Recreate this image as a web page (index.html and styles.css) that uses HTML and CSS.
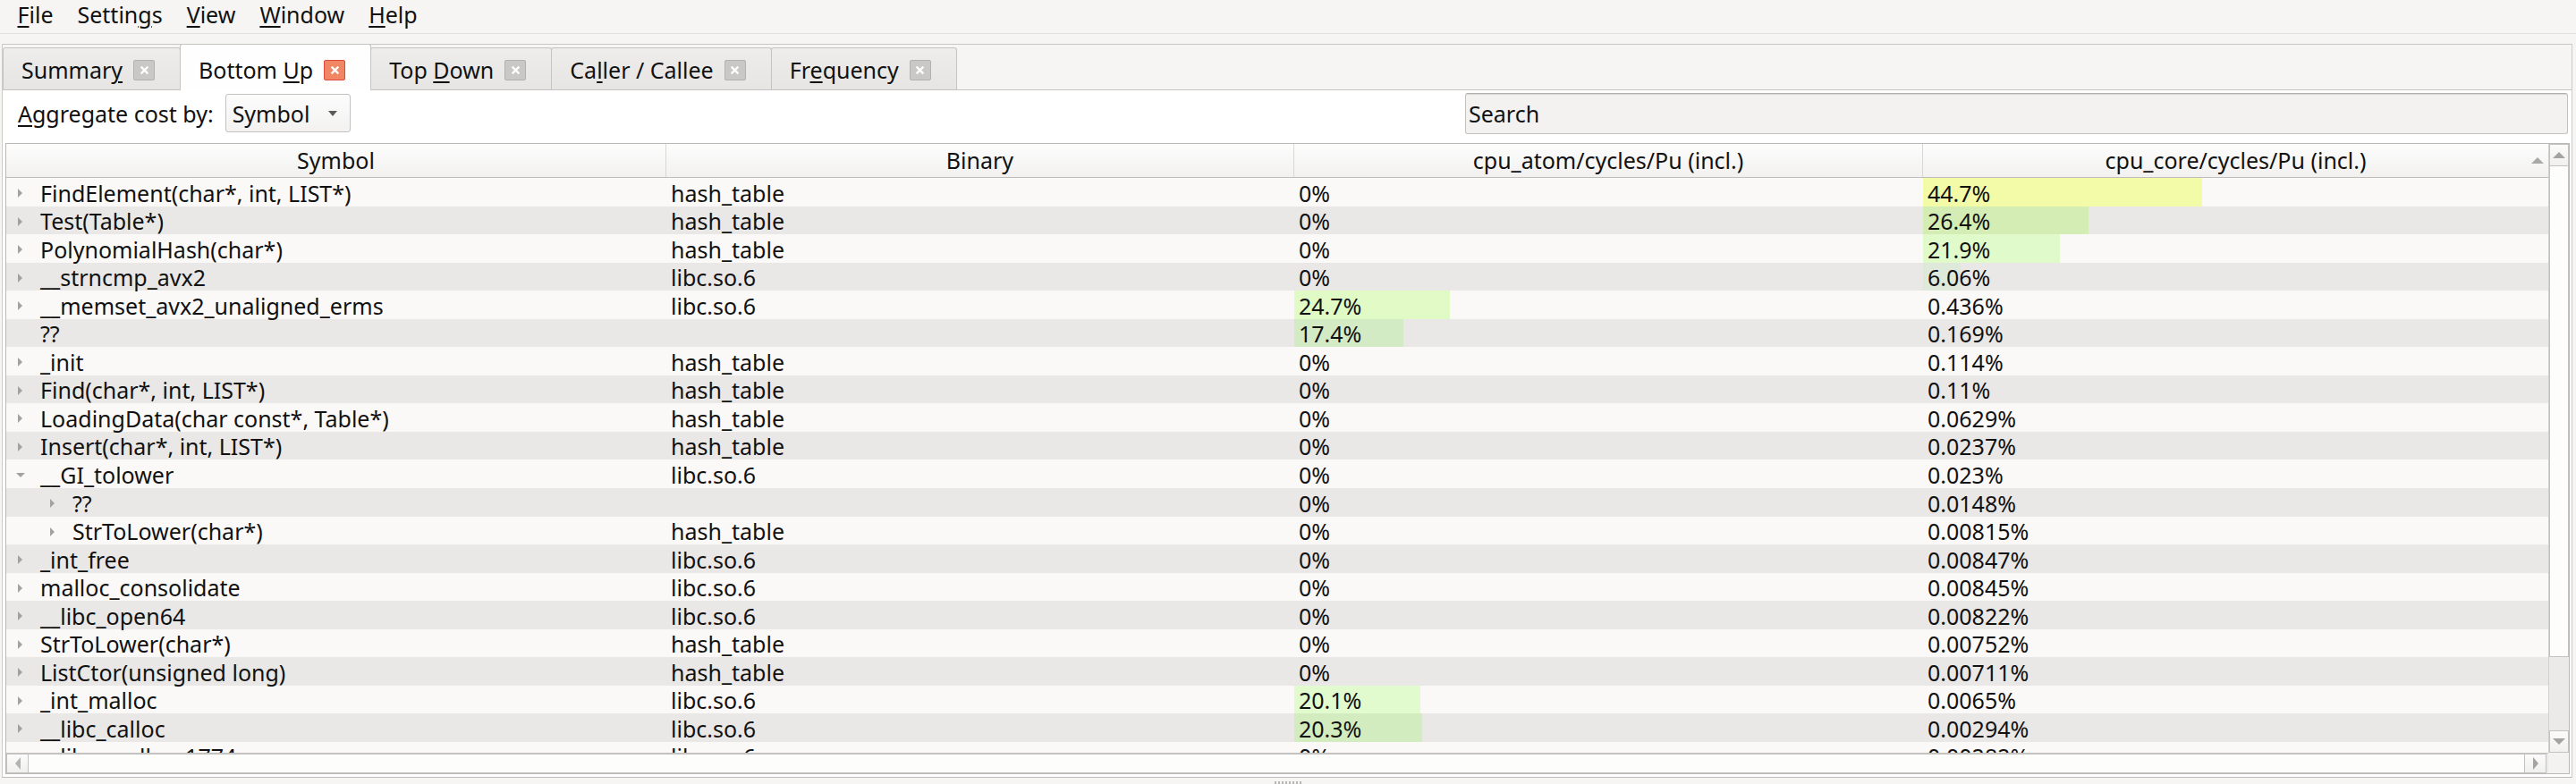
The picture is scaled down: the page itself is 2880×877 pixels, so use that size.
FILE: index.html
```html
<!DOCTYPE html>
<html>
<head>
<meta charset="utf-8">
<link rel="stylesheet" href="styles.css">
</head>
<body>
<div class="menubar">
  <span class="menu"><u>F</u>ile</span>
  <span class="menu">Settin<u>g</u>s</span>
  <span class="menu"><u>V</u>iew</span>
  <span class="menu"><u>W</u>indow</span>
  <span class="menu"><u>H</u>elp</span>
</div>
<div class="tabwidget">
  <div class="tabbar">
    <div class="tab"><span class="tab-label">Summar<u>y</u></span><span class="close"><svg viewBox="0 0 10 10"><path d="M1.5 1.5L8.5 8.5M8.5 1.5L1.5 8.5"/></svg></span></div>
    <div class="tab active"><span class="tab-label">Bottom <u>U</u>p</span><span class="close"><svg viewBox="0 0 10 10"><path d="M1.5 1.5L8.5 8.5M8.5 1.5L1.5 8.5"/></svg></span></div>
    <div class="tab"><span class="tab-label">Top <u>D</u>own</span><span class="close"><svg viewBox="0 0 10 10"><path d="M1.5 1.5L8.5 8.5M8.5 1.5L1.5 8.5"/></svg></span></div>
    <div class="tab"><span class="tab-label">Ca<u>l</u>ler / Callee</span><span class="close"><svg viewBox="0 0 10 10"><path d="M1.5 1.5L8.5 8.5M8.5 1.5L1.5 8.5"/></svg></span></div>
    <div class="tab"><span class="tab-label">Fr<u>e</u>quency</span><span class="close"><svg viewBox="0 0 10 10"><path d="M1.5 1.5L8.5 8.5M8.5 1.5L1.5 8.5"/></svg></span></div>
  </div>
  <div class="pane">
    <div class="toolbar">
      <span class="label"><u>A</u>ggregate cost by:</span>
      <div class="combo"><span>Symbol</span><i class="combo-arrow"></i></div>
      <div class="search">Search</div>
    </div>
    <div class="tree">
      <div class="view">
        <div class="header">
          <div class="hcell">Symbol</div>
          <div class="hcell">Binary</div>
          <div class="hcell">cpu_atom/cycles/Pu (incl.)</div>
          <div class="hcell sorted">cpu_core/cycles/Pu (incl.)<i class="sort-ind"></i></div>
        </div>
        <div class="rows">
          <div class="row"><div class="cell sym"><i class="tw"></i><span>FindElement(char*, int, LIST*)</span></div><div class="cell">hash_table</div><div class="cell">0%</div><div class="cell bar" style="--p:44.7%;--c:hsl(66.4 100% 50% / .326)">44.7%</div></div>
          <div class="row"><div class="cell sym"><i class="tw"></i><span>Test(Table*)</span></div><div class="cell">hash_table</div><div class="cell">0%</div><div class="cell bar" style="--p:26.4%;--c:hsl(88.3 100% 50% / .216)">26.4%</div></div>
          <div class="row"><div class="cell sym"><i class="tw"></i><span>PolynomialHash(char*)</span></div><div class="cell">hash_table</div><div class="cell">0%</div><div class="cell bar" style="--p:21.9%;--c:hsl(93.7 100% 50% / .184)">21.9%</div></div>
          <div class="row"><div class="cell sym"><i class="tw"></i><span>__strncmp_avx2</span></div><div class="cell">libc.so.6</div><div class="cell">0%</div><div class="cell bar" style="--p:6.06%;--c:hsl(112.7 100% 50% / .055)">6.06%</div></div>
          <div class="row"><div class="cell sym"><i class="tw"></i><span>__memset_avx2_unaligned_erms</span></div><div class="cell">libc.so.6</div><div class="cell bar" style="--p:24.7%;--c:hsl(90.4 100% 50% / .204)">24.7%</div><div class="cell">0.436%</div></div>
          <div class="row"><div class="cell sym"><i class="tw none"></i><span>??</span></div><div class="cell"></div><div class="cell bar" style="--p:17.4%;--c:hsl(99.1 100% 50% / .150)">17.4%</div><div class="cell">0.169%</div></div>
          <div class="row"><div class="cell sym"><i class="tw"></i><span>_init</span></div><div class="cell">hash_table</div><div class="cell">0%</div><div class="cell">0.114%</div></div>
          <div class="row"><div class="cell sym"><i class="tw"></i><span>Find(char*, int, LIST*)</span></div><div class="cell">hash_table</div><div class="cell">0%</div><div class="cell">0.11%</div></div>
          <div class="row"><div class="cell sym"><i class="tw"></i><span>LoadingData(char const*, Table*)</span></div><div class="cell">hash_table</div><div class="cell">0%</div><div class="cell">0.0629%</div></div>
          <div class="row"><div class="cell sym"><i class="tw"></i><span>Insert(char*, int, LIST*)</span></div><div class="cell">hash_table</div><div class="cell">0%</div><div class="cell">0.0237%</div></div>
          <div class="row"><div class="cell sym"><i class="tw open"></i><span>__GI_tolower</span></div><div class="cell">libc.so.6</div><div class="cell">0%</div><div class="cell">0.023%</div></div>
          <div class="row"><div class="cell sym child"><i class="tw"></i><span>??</span></div><div class="cell"></div><div class="cell">0%</div><div class="cell">0.0148%</div></div>
          <div class="row"><div class="cell sym child"><i class="tw"></i><span>StrToLower(char*)</span></div><div class="cell">hash_table</div><div class="cell">0%</div><div class="cell">0.00815%</div></div>
          <div class="row"><div class="cell sym"><i class="tw"></i><span>_int_free</span></div><div class="cell">libc.so.6</div><div class="cell">0%</div><div class="cell">0.00847%</div></div>
          <div class="row"><div class="cell sym"><i class="tw"></i><span>malloc_consolidate</span></div><div class="cell">libc.so.6</div><div class="cell">0%</div><div class="cell">0.00845%</div></div>
          <div class="row"><div class="cell sym"><i class="tw"></i><span>__libc_open64</span></div><div class="cell">libc.so.6</div><div class="cell">0%</div><div class="cell">0.00822%</div></div>
          <div class="row"><div class="cell sym"><i class="tw"></i><span>StrToLower(char*)</span></div><div class="cell">hash_table</div><div class="cell">0%</div><div class="cell">0.00752%</div></div>
          <div class="row"><div class="cell sym"><i class="tw"></i><span>ListCtor(unsigned long)</span></div><div class="cell">hash_table</div><div class="cell">0%</div><div class="cell">0.00711%</div></div>
          <div class="row"><div class="cell sym"><i class="tw"></i><span>_int_malloc</span></div><div class="cell">libc.so.6</div><div class="cell bar" style="--p:20.1%;--c:hsl(95.9 100% 50% / .170)">20.1%</div><div class="cell">0.0065%</div></div>
          <div class="row"><div class="cell sym"><i class="tw"></i><span>__libc_calloc</span></div><div class="cell">libc.so.6</div><div class="cell bar" style="--p:20.3%;--c:hsl(95.6 100% 50% / .172)">20.3%</div><div class="cell">0.00294%</div></div>
          <div class="row"><div class="cell sym"><i class="tw"></i><span>__libc_malloc_1774</span></div><div class="cell">libc.so.6</div><div class="cell">0%</div><div class="cell">0.00282%</div></div>
        </div>
      </div>
      <div class="vscroll">
        <div class="sbtn"><i class="arr up"></i></div>
        <div class="vslider"></div>
        <div class="trough"></div>
        <div class="sbtn"><i class="arr down"></i></div>
      </div>
      <div class="hscroll">
        <div class="sbtn"><i class="arr left"></i></div>
        <div class="hslider"></div>
        <div class="sbtn"><i class="arr right"></i></div>
      </div>
      <div class="corner"></div>
    </div>
  </div>
</div>
<div class="splitter"><i class="grip"></i></div>
</body>
</html>
```
FILE: styles.css
```css
* { box-sizing: border-box; }
html, body { margin: 0; height: 877px; overflow: hidden; }
body {
  background: #f6f5f4;
  font-family: "Noto Sans", "DejaVu Sans", sans-serif;
  font-size: 25px;
  color: #111;
  display: flex;
  flex-direction: column;
}
u { text-decoration: underline; text-decoration-thickness: 2px; text-underline-offset: 3px; }

/* menu bar */
.menubar {
  height: 38px;
  flex: none;
  display: flex;
  align-items: flex-start;
  padding-left: 6px;
  border-bottom: 1px solid #e2e0de;
}
.menu { padding: 0 13.5px; line-height: 33px; }

/* tab widget */
.tabwidget {
  flex: 1;
  margin: 11px 4px 0 2px;
  border-left: 1px solid #cdcbc8;
  border-right: 1px solid #cdcbc8;
  border-bottom: 1px solid #bdbbb8;
  display: flex;
  flex-direction: column;
  min-height: 0;
}
.tabbar {
  height: 52px;
  flex: none;
  display: flex;
  align-items: flex-end;
  border-top: 1px solid #c9c7c4;
  border-bottom: 1px solid #c6c4c1;
}
.tab {
  height: 47px;
  display: flex;
  align-items: center;
  padding: 8px 28px 6px 20px;
  background: linear-gradient(#eeedec, #e6e5e3);
  border: 1px solid #c6c4c1;
  border-bottom: none;
  border-radius: 3px 3px 0 0;
  margin-right: -1px;
  line-height: 32px;
  white-space: nowrap;
}
.tab.active {
  height: 52px;
  margin-bottom: -1px;
  padding: 12px 28px 7px 20px;
  background: #fefefe;
  position: relative;
  z-index: 1;
}
.close {
  flex: none;
  width: 24px;
  height: 23px;
  margin-left: 12px;
  border: 1px solid #b3b1ae;
  border-radius: 2px;
  background: #c9c8c6;
  display: flex;
  align-items: center;
  justify-content: center;
}
.close svg { width: 11px; height: 11px; }
.close path { stroke: #fff; stroke-width: 2; fill: none; }
.tab.active .close { background: #f08664; border-color: #dc4a3b; }

/* pane */
.pane {
  flex: 1;
  background: #fff;
  display: flex;
  flex-direction: column;
  min-height: 0;
}
.toolbar {
  height: 59px;
  flex: none;
  display: flex;
  align-items: flex-start;
  padding: 3px 4px 0 17px;
}
.label { margin-top: 1px; line-height: 45px; white-space: nowrap; }
.combo {
  margin: 1px 0 0 13px;
  width: 140px;
  height: 43px;
  border: 1px solid #c4c2bf;
  border-radius: 3px;
  background: linear-gradient(#fcfcfc, #f3f2f1);
  display: flex;
  align-items: center;
  padding: 0 14px 0 7px;
  line-height: 32px;
}
.combo span { flex: 1; }
.combo-arrow {
  width: 0; height: 0;
  border-left: 5px solid transparent;
  border-right: 5px solid transparent;
  border-top: 6px solid #5a5a5a;
}
.search {
  margin-left: auto;
  width: 1233px;
  height: 46px;
  border: 1px solid #c3c1be;
  border-top-color: #b2b0ad;
  border-radius: 3px;
  background: #f3f2f1;
  box-shadow: inset 0 2px 1px -1px #d6d4d1;
  padding: 0 3px;
  line-height: 44px;
}

/* tree */
.tree {
  flex: 1;
  margin: 0 2px 3px 3px;
  border: 1px solid #bab8b5;
  display: grid;
  grid-template-columns: 1fr 23px;
  grid-template-rows: 1fr 23px;
  min-height: 0;
  background: #faf9f8;
}
.view { display: flex; flex-direction: column; min-height: 0; overflow: hidden; }
.header {
  height: 38px;
  flex: none;
  display: grid;
  grid-template-columns: 738px 702px 703px 699px;
  background: linear-gradient(#fdfdfd, #f2f1f0);
  border-bottom: 1px solid #bfbdba;
}
.hcell {
  text-align: center;
  line-height: 37px;
  border-right: 1px solid #d9d7d4;
  position: relative;
  white-space: nowrap;
}
.hcell.sorted { border-right: none; }
.sort-ind {
  position: absolute;
  right: 5px;
  top: 15px;
  width: 0; height: 0;
  border-left: 7px solid transparent;
  border-right: 7px solid transparent;
  border-bottom: 7px solid #aaa9a7;
}
.rows { flex: 1; overflow: hidden; }
.row {
  height: 31.55px;
  display: grid;
  grid-template-columns: 738px 702px 703px 699px;
  background: #faf9f8;
}
.row:nth-child(even) { background: #e9e8e7; }
.cell {
  padding: 2.5px 0 0 5px;
  line-height: 29px;
  white-space: nowrap;
}
.cell.bar {
  background: linear-gradient(to right, var(--c) var(--p), transparent var(--p)) no-repeat;
}
.sym { display: flex; align-items: center; padding-left: 13px; }
.sym.child { padding-left: 49px; }
.tw {
  flex: none;
  width: 0; height: 0;
  border-left: 5px solid #a3a2a0;
  border-top: 5px solid transparent;
  border-bottom: 5px solid transparent;
  margin-right: 20px;
}
.tw.none { border-left-color: transparent; }
.tw.open {
  border-left: 5px solid transparent;
  border-right: 5px solid transparent;
  border-top: 5px solid #a3a2a0;
  border-bottom: none;
  margin-left: -2px;
  margin-right: 17px;
}

/* scrollbars */
.vscroll {
  grid-row: 1;
  grid-column: 2;
  display: flex;
  flex-direction: column;
  background: #ebeae9;
  border-left: 1px solid #d2d0cd;
}
.sbtn {
  flex: none;
  height: 25px;
  background: linear-gradient(#fbfbfb, #f1f0ef);
  border: 1px solid #c4c2bf;
  display: flex;
  align-items: center;
  justify-content: center;
}
.vslider {
  height: 549px;
  flex: none;
  background: #fdfdfc;
  border: 1px solid #c4c2bf;
  border-top: none;
}
.trough { flex: 1; }
.hscroll {
  grid-row: 2;
  grid-column: 1;
  display: flex;
  background: #ebeae9;
  border-top: 1px solid #c4c2bf;
  padding-right: 2px;
}
.hscroll .sbtn { height: auto; width: 25px; }
.hslider {
  flex: 1;
  background: #fdfdfc;
  border: 1px solid #c4c2bf;
  border-left: none;
  border-right: none;
}
.corner { grid-row: 2; grid-column: 2; background: #f3f2f1; }
.arr { width: 0; height: 0; }
.arr.up { border-left: 7px solid transparent; border-right: 7px solid transparent; border-bottom: 7px solid #a4a3a1; }
.arr.down { border-left: 7px solid transparent; border-right: 7px solid transparent; border-top: 7px solid #a4a3a1; }
.arr.left { border-top: 7px solid transparent; border-bottom: 7px solid transparent; border-right: 6px solid #b4b3b1; }
.arr.right { border-top: 7px solid transparent; border-bottom: 7px solid transparent; border-left: 6px solid #a4a3a1; }

/* splitter */
.splitter { height: 7px; flex: none; display: flex; justify-content: center; align-items: flex-end; }
.grip {
  width: 30px;
  height: 3px;
  background: repeating-linear-gradient(to right, #b8b6b3 0 2px, transparent 2px 4px);
}
```
